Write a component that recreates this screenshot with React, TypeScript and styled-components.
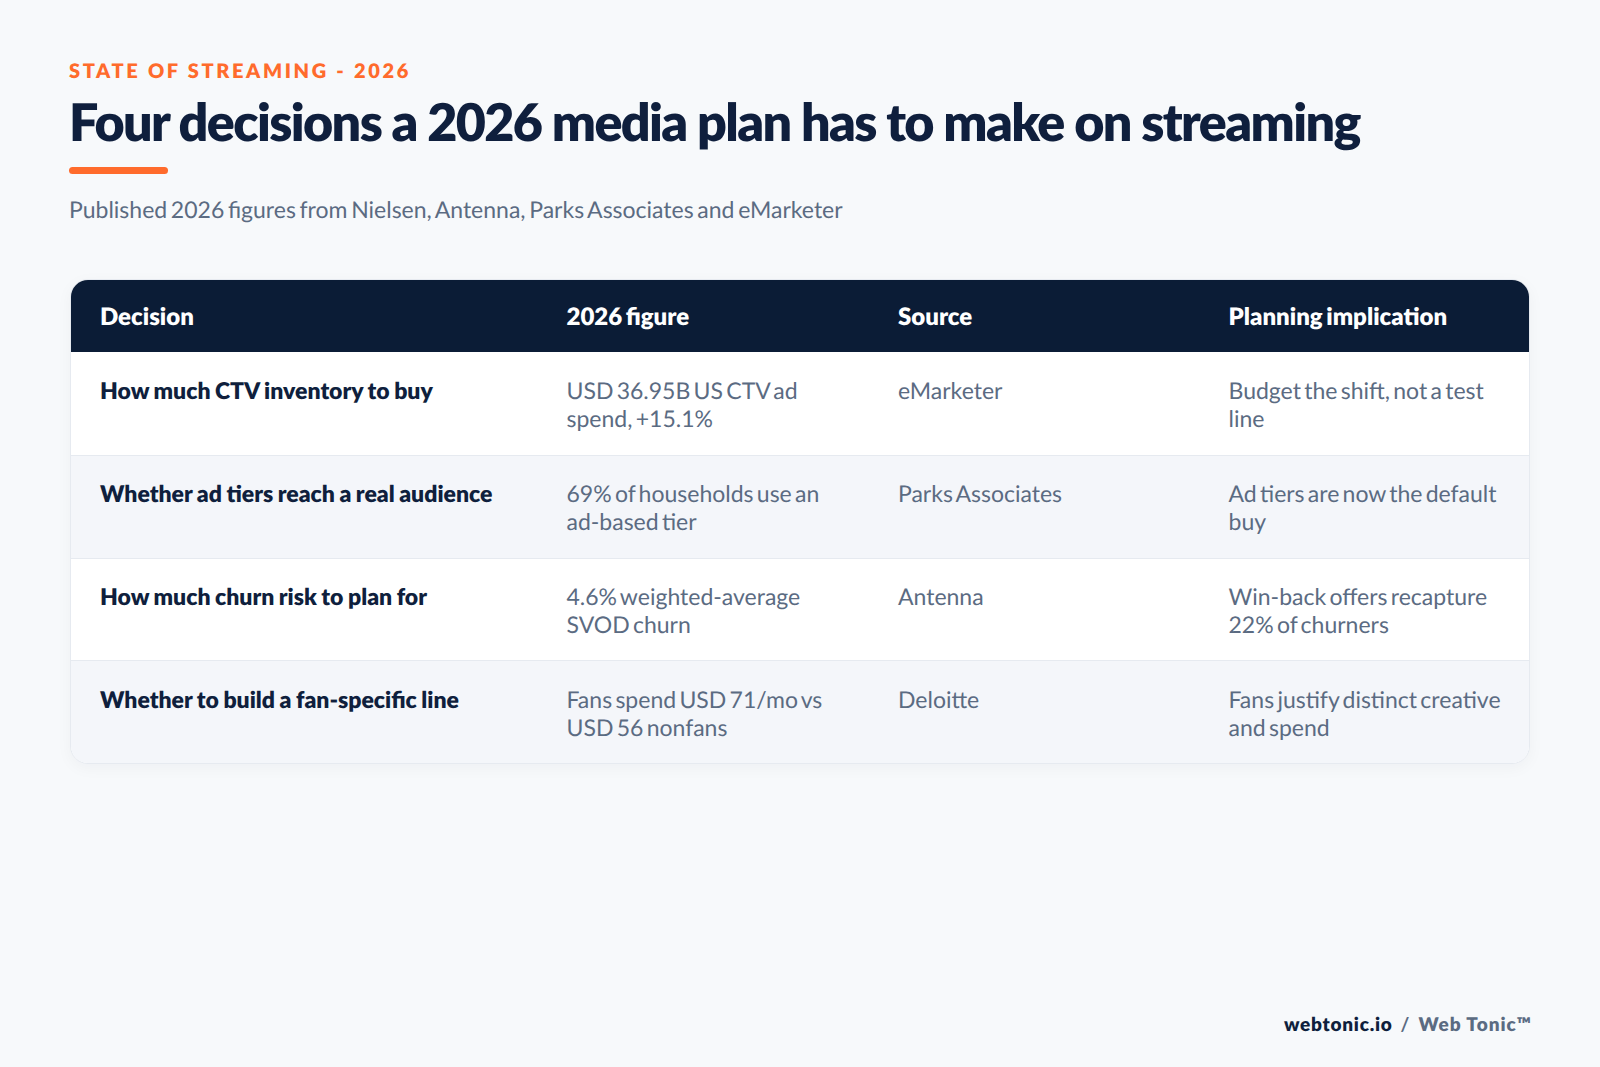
import { FC } from 'react';
import styled, { createGlobalStyle } from 'styled-components';

const rows = [
  {
    decision: 'How much CTV inventory to buy',
    figure: 'USD 36.95B US CTV ad spend, +15.1%',
    source: 'eMarketer',
    implication: 'Budget the shift, not a test line',
  },
  {
    decision: 'Whether ad tiers reach a real audience',
    figure: '69% of households use an ad-based tier',
    source: 'Parks Associates',
    implication: 'Ad tiers are now the default buy',
  },
  {
    decision: 'How much churn risk to plan for',
    figure: '4.6% weighted-average SVOD churn',
    source: 'Antenna',
    implication: 'Win-back offers recapture 22% of churners',
  },
  {
    decision: 'Whether to build a fan-specific line',
    figure: 'Fans spend USD 71/mo vs USD 56 nonfans',
    source: 'Deloitte',
    implication: 'Fans justify distinct creative and spend',
  },
];

const App: FC = () => {
  return (
    <Page>
      <GlobalStyle />
      <Header>
        <Eyebrow>STATE OF STREAMING - 2026</Eyebrow>
        <Title>Four decisions a 2026 media plan has to make on streaming</Title>
        <Accent />
        <Subtitle>Published 2026 figures from Nielsen, Antenna, Parks Associates and eMarketer</Subtitle>
      </Header>
      <Table>
        <HeadRow>
          <HeadCell>Decision</HeadCell>
          <HeadCell>2026 figure</HeadCell>
          <HeadCell>Source</HeadCell>
          <HeadCell>Planning implication</HeadCell>
        </HeadRow>
        {rows.map((row, i) => (
          <Row key={row.decision} $striped={i % 2 === 1}>
            <DecisionCell>{row.decision}</DecisionCell>
            <Cell>{row.figure}</Cell>
            <Cell>{row.source}</Cell>
            <Cell>{row.implication}</Cell>
          </Row>
        ))}
      </Table>
      <Footer>
        <strong>webtonic.io</strong>
        <Slash>/</Slash>
        <Brand>Web Tonic™</Brand>
      </Footer>
    </Page>
  );
};

export default App;

const GlobalStyle = createGlobalStyle`
  * {
    box-sizing: border-box;
  }
  body {
    margin: 0;
    background: #f7f9fb;
    font-family: Lato, sans-serif;
    text-rendering: geometricPrecision;
  }
`;

const Page = styled.div`
  display: flex;
  flex-direction: column;
  height: 1067px;
  padding: 57px 70px 28px;
  background: #f7f9fb;
`;

const Header = styled.header`
  margin: 0 0 54px -1px;
`;

const Eyebrow = styled.div`
  font-size: 20px;
  line-height: 28px;
  font-weight: 800;
  letter-spacing: 2.6px;
  word-spacing: 0.4px;
  color: #ff6b2c;
`;

const Title = styled.h1`
  margin: 5px 0 0;
  font-size: 52px;
  line-height: 64px;
  font-weight: 800;
  letter-spacing: -1.62px;
  color: #0f1f3d;
`;

const Accent = styled.div`
  width: 99px;
  height: 7px;
  margin-top: 13px;
  border-radius: 4px;
  background: #ff6b2c;
`;

const Subtitle = styled.p`
  margin: 19px 0 0;
  font-size: 23px;
  line-height: 32px;
  font-weight: 400;
  word-spacing: -2.2px;
  color: #5b6b82;
`;

const Table = styled.div`
  border: 1px solid #e6eaf0;
  border-radius: 18px;
  overflow: hidden;
  background: #ffffff;
  box-shadow: 0 4px 16px rgba(15, 31, 61, 0.04);
`;

const HeadRow = styled.div`
  display: grid;
  grid-template-columns: 466.5px 331.5px 330.5px 1fr;
  height: 72px;
  align-items: center;
  background: #0b1c36;
`;

const HeadCell = styled.div`
  padding: 0 20px 0 29px;
  font-size: 24px;
  font-weight: 800;
  word-spacing: -2px;
  color: #ffffff;
`;

const Row = styled.div<{ $striped: boolean }>`
  display: grid;
  grid-template-columns: 466.5px 331.5px 330.5px 1fr;
  height: 102.8px;
  padding-top: 23.6px;
  background: ${(p) => (p.$striped ? '#f4f6fa' : '#ffffff')};
  & + & {
    border-top: 1px solid #e6eaf0;
  }
`;

const Cell = styled.div`
  padding: 0 20px 0 29px;
  font-size: 23px;
  line-height: 28px;
  word-spacing: -2.6px;
  color: #5b6b82;
`;

const DecisionCell = styled(Cell)`
  font-weight: 800;
  word-spacing: -0.8px;
  color: #0f1f3d;
`;

const Footer = styled.footer`
  display: flex;
  justify-content: flex-end;
  align-items: center;
  gap: 8px;
  margin: auto -2px 0 0;
  font-size: 19px;
  line-height: 28px;
  letter-spacing: 1px;
  strong {
    font-weight: 800;
    letter-spacing: 0.75px;
    color: #0f1f3d;
  }
`;

const Slash = styled.span`
  font-weight: 700;
  color: #5b6b82;
`;

const Brand = styled.span`
  font-weight: 800;
  color: #5b6b82;
`;
